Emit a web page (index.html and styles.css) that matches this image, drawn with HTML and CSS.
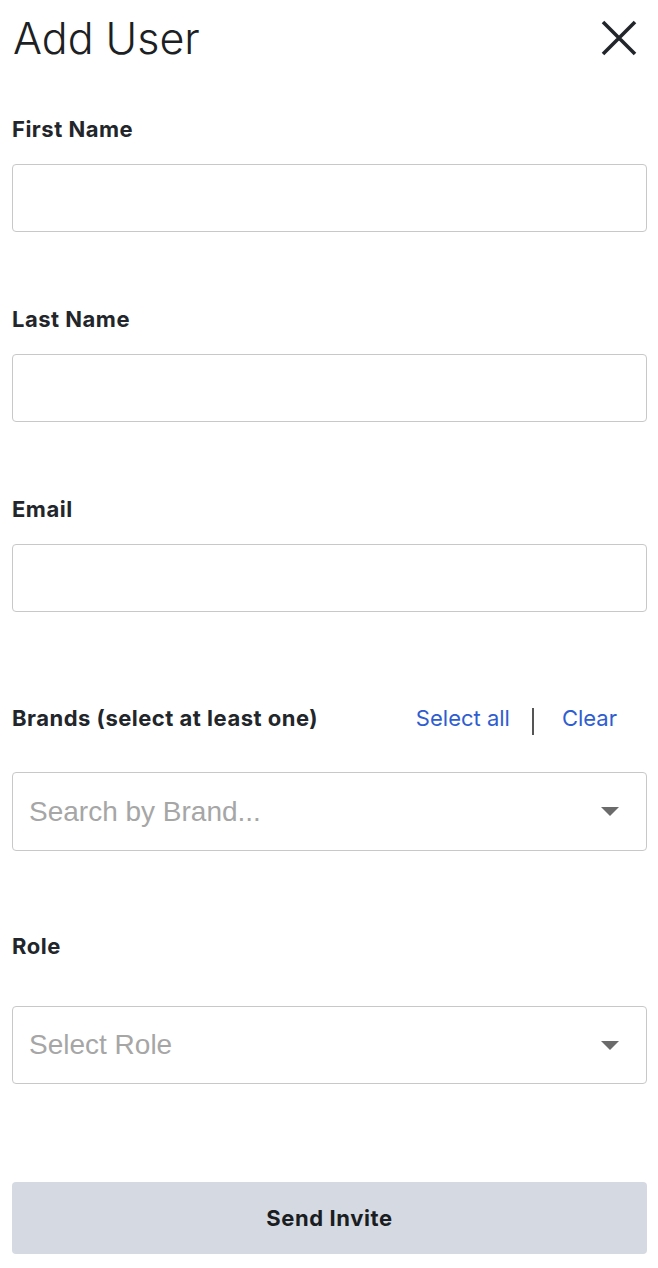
FILE: index.html
```html
<!DOCTYPE html>
<html>
<head>
<meta charset="utf-8">
<link rel="stylesheet" href="styles.css">
</head>
<body>
<div class="panel">
  <header class="head">
    <h1 class="title">Add User</h1>
    <button class="close" aria-label="Close">
      <svg width="36" height="36" viewBox="0 0 36 36"><path d="M2 2 L34 34 M34 2 L2 34" stroke="#22262b" stroke-width="3.6" fill="none"/></svg>
    </button>
  </header>

  <div class="field f1">
    <label class="label">First Name</label>
    <div class="input"></div>
  </div>
  <div class="field">
    <label class="label">Last Name</label>
    <div class="input"></div>
  </div>
  <div class="field">
    <label class="label">Email</label>
    <div class="input"></div>
  </div>

  <div class="field brands">
    <div class="label-row">
      <label class="label">Brands (select at least one)</label>
      <div class="links">
        <a class="link">Select all</a>
        <span class="sep"></span>
        <a class="link">Clear</a>
      </div>
    </div>
    <div class="select">
      <span class="ph">Search by Brand...</span>
      <span class="caret"></span>
    </div>
  </div>

  <div class="field role">
    <label class="label">Role</label>
    <div class="select role-select">
      <span class="ph">Select Role</span>
      <span class="caret"></span>
    </div>
  </div>

  <button class="send">Send Invite</button>
</div>
</body>
</html>
```
FILE: styles.css
```css
html, body { margin: 0; padding: 0; background: #fff; }
body { font-family: Inter, "Noto Sans", sans-serif; color: #1f2328; }
.panel { padding: 0 11px 0 12px; }
.head { display: flex; justify-content: space-between; align-items: flex-start; height: 80px; }
.title { margin: 17px 0 0 1px; font-family: Inter, sans-serif; font-weight: 300; font-size: 43px; line-height: 43px; color: #1c1f23; }
.close { border: 0; background: none; padding: 0; margin: 20px 10px 0 0; width: 36px; height: 36px; display: flex; }
.field { display: flex; flex-direction: column; }
.f1 { margin-top: 37px; }
.label { font-size: 22px; font-weight: 700; letter-spacing: 0.5px; color: #22262b; line-height: 24px; display: block; }
.input { margin-top: 23px; height: 68px; box-sizing: border-box; border: 1px solid #c8c8c8; border-radius: 4px; margin-bottom: 75px; }
.brands { margin-top: 19px; }
.label-row { display: flex; justify-content: space-between; align-items: center; height: 24px; }
.links { display: flex; align-items: center; margin-right: 30px; }
.link { font-family: Inter, sans-serif; color: #2f5dd0; font-size: 22px; line-height: 24px; }
.sep { display: block; flex: none; width: 2px; height: 27px; background: #555; margin: 0 28px 0 22px; transform: translateY(3px); }
.select { margin-top: 42px; height: 79px; border: 1px solid #c8c8c8; border-radius: 4px; display: flex; align-items: center; justify-content: space-between; padding: 0 27px 0 16px; box-sizing: border-box; }
.ph { font-family: "Liberation Sans", Arial, sans-serif; font-size: 28px; color: #a6a6a6; }
.caret { width: 0; height: 0; border-left: 9px solid transparent; border-right: 9px solid transparent; border-top: 9px solid #6b6b6b; }
.role { margin-top: 83px; }
.role-select { margin-top: 48px; height: 78px; }
.send { margin-top: 98px; width: 100%; height: 72px; border: 0; border-radius: 4px; background: #d5d9e2; font-family: Inter, sans-serif; font-weight: 700; font-size: 22px; letter-spacing: 0.6px; color: #1a1d21; }
```
